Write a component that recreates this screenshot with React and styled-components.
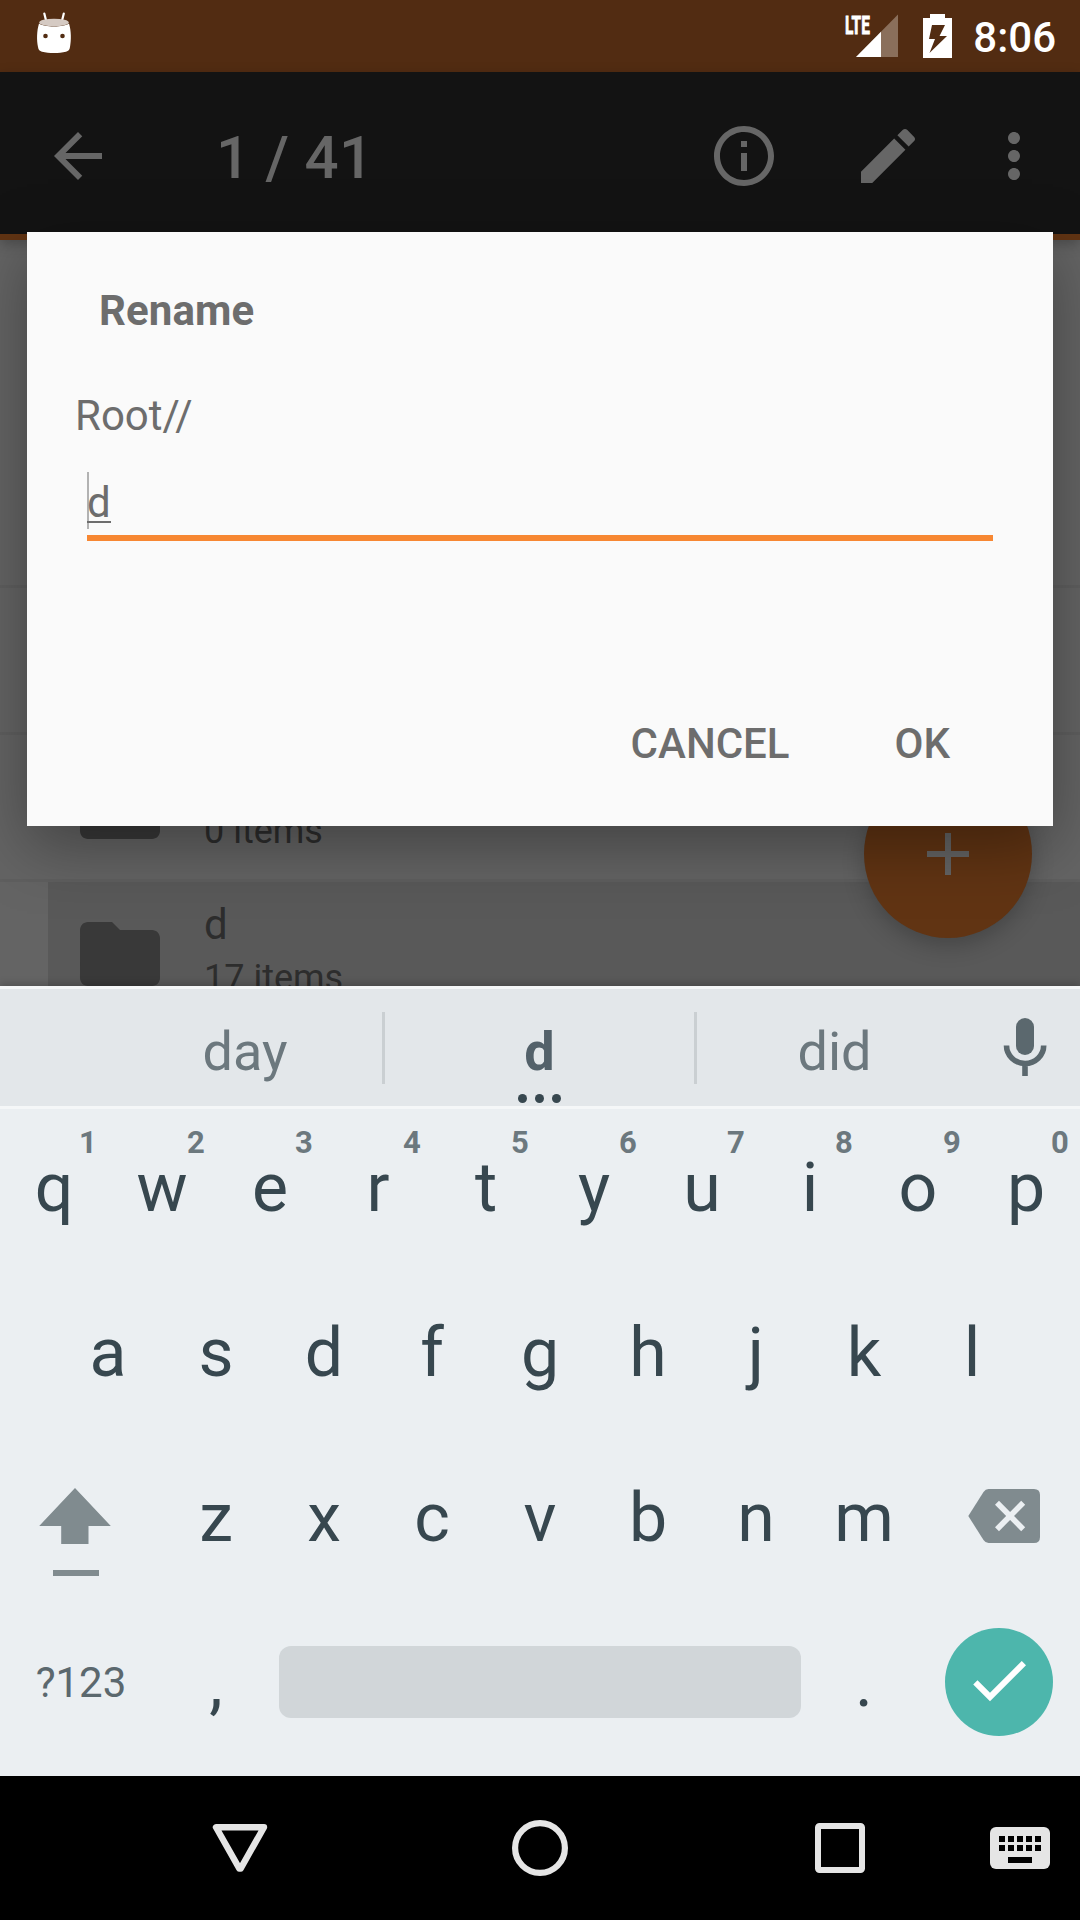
import React from "react";
import styled, { createGlobalStyle } from "styled-components";

const GlobalStyle = createGlobalStyle`
  * { box-sizing: border-box; }
  body { margin: 0; background: #000; font-family: Roboto, "Noto Sans", sans-serif; }
  svg { display: block; flex: none; }
`;

const Screen = styled.div`
  position: relative;
  display: flex;
  flex-direction: column;
  width: 1080px;
  height: 1920px;
  overflow: hidden;
`;

/* ---------- status bar ---------- */
const StatusBar = styled.header`
  display: flex;
  align-items: flex-start;
  flex: none;
  height: 72px;
  padding: 12px 24px 0 36px;
  background: #522c12;
`;
const StatusIcons = styled.div`
  display: flex;
  align-items: flex-start;
  margin-left: auto;
`;
const Signal = styled.svg`
  overflow: visible;
`;
const Battery = styled.svg`
  margin: 2px 21px 0 24px;
`;
const Clock = styled.span`
  margin-top: 1px;
  color: #fff;
  font-size: 42px;
  font-weight: 500;
  line-height: 50px;
  white-space: nowrap;
`;

/* ---------- toolbar ---------- */
const Toolbar = styled.nav`
  position: relative;
  display: flex;
  align-items: center;
  flex: none;
  height: 168px;
  padding: 0 30px 0 42px;
  background: #131313;
  border-bottom: 6px solid #613413;
  box-shadow: 0 4px 12px rgba(0, 0, 0, 0.25);
  color: #666;
`;
const ToolbarTitle = styled.h1`
  flex: 1;
  margin: 9px 0 0 102px;
  font-size: 60px;
  font-weight: 500;
  line-height: 70px;
  letter-spacing: 0.3px;
`;
const ToolbarIcon = styled.svg`
  width: 72px;
  height: 72px;
  margin: 6px 0 0 ${(p) => p.$gap || 0}px;
  fill: currentColor;
`;

/* ---------- file list ---------- */
const FileList = styled.main`
  flex: none;
  height: 746px;
  overflow: hidden;
  background: #646464;
`;
const ListRow = styled.div`
  display: flex;
  height: ${(p) => p.$height || 147}px;
  padding-left: 48px;
  border-bottom: 3px solid #5f5f5f;
`;
const RowBody = styled.div`
  display: flex;
  flex: 1;
  padding: 24px 0 0 24px;
  background: ${(p) => (p.$selected ? "#595959" : "transparent")};
`;
const RowText = styled.div`
  display: flex;
  flex-direction: column;
  margin: -7px 0 0 36px;
  color: #2d2d2d;
`;
const RowName = styled.span`
  font-size: 42px;
  line-height: 51px;
`;
const RowMeta = styled.span`
  font-size: 36px;
  line-height: 57px;
`;
const Fab = styled.button`
  position: absolute;
  left: 864px;
  top: 770px;
  display: grid;
  place-items: center;
  width: 168px;
  height: 168px;
  padding: 0;
  border: 0;
  border-radius: 50%;
  background: #613413;
  box-shadow: 0 8px 22px rgba(0, 0, 0, 0.22);
`;

/* ---------- dialog ---------- */
const DialogLayer = styled.div`
  position: absolute;
  inset: 72px 0 934px;
  padding: 160px 27px 0;
  overflow: hidden;
`;
const Dialog = styled.section`
  display: flex;
  flex-direction: column;
  height: 594px;
  padding: 54px 60px 0 48px;
  background: #fafafa;
  box-shadow: 0 20px 60px rgba(0, 0, 0, 0.34);
  color: #6d6d6d;
  font-size: 42px;
  line-height: 50px;
`;
const DialogTitle = styled.h2`
  margin: 0 0 0 24px;
  font-size: 42px;
  font-weight: 700;
  line-height: 50px;
  letter-spacing: 0.1px;
`;
const PathLabel = styled.div`
  margin-top: 55px;
`;
const NameField = styled.div`
  display: flex;
  height: 69px;
  margin: 31px 0 0 12px;
  border-bottom: 6px solid #f78732;
`;
const Caret = styled.span`
  width: 1.5px;
  height: 57px;
  margin-right: -1.5px;
  background: #b2b2b2;
`;
const Composing = styled.span`
  height: 51px;
  padding-top: 6px;
  line-height: 50px;
  border-bottom: 2px solid #6d6d6d;
`;
const DialogActions = styled.div`
  display: flex;
  justify-content: flex-end;
  gap: 105px;
  margin-top: 178px;
  padding-right: 43px;
`;
const ActionButton = styled.button`
  padding: 0;
  border: 0;
  background: none;
  color: inherit;
  font: 500 42px/50px Roboto, sans-serif;
  white-space: nowrap;
`;

/* ---------- keyboard ---------- */
const Keyboard = styled.section`
  position: relative;
  display: flex;
  flex-direction: column;
  flex: none;
  height: 790px;
  background: #ebeff2;
  box-shadow: 0 -2px 8px rgba(0, 0, 0, 0.2);
`;
const Suggestions = styled.div`
  display: grid;
  grid-template-columns: 108px 274px 3px 309px 3px 275px 108px;
  align-items: start;
  height: 123px;
  border-top: 3px solid #f5f7f8;
  border-bottom: 3px solid #f5f7f8;
  background: #e3e7ea;
`;
const Divider = styled.span`
  height: 72px;
  margin-top: 23px;
  background: #cacfd2;
`;
const Suggestion = styled.div`
  display: flex;
  flex-direction: column;
  align-items: center;
  padding-top: 32px;
  color: ${(p) => (p.$active ? "#53616a" : "#6c787e")};
  font-size: 54px;
  font-weight: ${(p) => (p.$active ? 700 : 400)};
  line-height: 62px;
`;
const Dots = styled.span`
  display: flex;
  gap: 8px;
  margin-top: 11px;
`;
const Dot = styled.i`
  width: 9px;
  height: 9px;
  border-radius: 50%;
  background: #37474f;
`;
const MicIcon = styled.svg`
  margin: 29px 0 0 31px;
`;
const KeyRow = styled.div`
  display: flex;
  justify-content: center;
  flex: none;
  height: ${(p) => p.$height || 165}px;
  padding-bottom: ${(p) => p.$bottom || 0}px;
`;
const Key = styled.div`
  position: relative;
  display: flex;
  align-items: center;
  justify-content: center;
  width: ${(p) => p.$width || 108}px;
  padding-top: ${(p) => p.$drop || 0}px;
  color: #37474f;
  font-size: 68px;
  line-height: 80px;
`;
const Hint = styled.sup`
  position: absolute;
  left: 68px;
  top: 16px;
  width: 40px;
  color: #6c787e;
  font-size: 31px;
  font-weight: 700;
  line-height: 36px;
  text-align: center;
`;
const SymbolLabel = styled.span`
  color: #5b686e;
  font-size: 42px;
  line-height: 50px;
`;
const SpaceBar = styled.div`
  align-self: center;
  width: 522px;
  height: 72px;
  margin: 0 9px;
  border-radius: 12px;
  background: #d1d6d9;
`;
const EnterButton = styled.div`
  display: grid;
  place-items: center;
  width: 108px;
  height: 108px;
  border-radius: 50%;
  background: #4db6ac;
`;

/* ---------- navigation bar ---------- */
const NavBar = styled.footer`
  display: flex;
  align-items: center;
  flex: none;
  height: 144px;
  padding: 0 30px 0 212px;
  background: #000;
`;
const NavIcon = styled.svg`
  margin-right: ${(p) => p.$after || 0}px;
`;

const FolderIcon = () => (
  <svg width="96" height="96" viewBox="0 0 24 24" fill="#393939">
    <path d="M10 4H4c-1.1 0-1.99.9-1.99 2L2 18c0 1.1.9 2 2 2h16c1.1 0 2-.9 2-2V8c0-1.1-.9-2-2-2h-8l-2-2z" />
  </svg>
);

const FileRow = ({ name, meta, selected }) => (
  <ListRow>
    <RowBody $selected={selected}>
      <FolderIcon />
      <RowText>
        <RowName>{name}</RowName>
        <RowMeta>{meta}</RowMeta>
      </RowText>
    </RowBody>
  </ListRow>
);

const letters = (s) => s.split("").map((c) => <Key key={c}>{c}</Key>);

export default function App() {
  return (
    <Screen>
      <GlobalStyle />
      <StatusBar>
        <svg width="36" height="42" viewBox="36 12 36 42">
          <path d="M44.3 13.5l2 8M63.8 13.5l-2 8" stroke="#fff" strokeWidth="2.2" strokeLinecap="round" />
          <path d="M39 23.5C44 27.5 64 27.5 69 23.5C71.3 31 71.3 40 70 47C69.5 50 68.5 51 66 51.7C59 53.4 49 53.4 42 51.7C39.5 51 38.5 50 38 47C36.6 40 36.7 31 39 23.5Z" fill="#fff" />
          <ellipse cx="54" cy="22.5" rx="14.8" ry="3.8" fill="#d5cac3" />
          <circle cx="45.5" cy="36" r="2.3" fill="#522c12" />
          <circle cx="62.5" cy="36" r="2.3" fill="#522c12" />
        </svg>
        <StatusIcons>
          <Signal width="54" height="46" viewBox="845 12 54 46">
            <text transform="translate(845 34) scale(.58 1)" fontSize="26.5" fontWeight="700" fill="#fff" stroke="#fff" strokeWidth="0.9">LTE</text>
            <path d="M898 14.5V57H856z" fill="#8a6f5b" />
            <path d="M881 31.7V57H856z" fill="#fff" />
          </Signal>
          <Battery width="29" height="44" viewBox="923 14 29 44">
            <path d="M930 14h15v4h7v40h-29V18h7zM932 25l-3 14h6l-5.5 14L947 36h-7.5l5.5-11z" fill="#fff" fillRule="evenodd" />
          </Battery>
          <Clock>8:06</Clock>
        </StatusIcons>
      </StatusBar>

      <Toolbar>
        <ToolbarIcon viewBox="0 0 24 24">
          <path d="M20 11H7.83l5.59-5.59L12 4l-8 8 8 8 1.41-1.41L7.83 13H20v-2z" />
        </ToolbarIcon>
        <ToolbarTitle>1 / 41</ToolbarTitle>
        <ToolbarIcon viewBox="0 0 24 24">
          <path d="M11 17h2v-6h-2v6zm1-15C6.48 2 2 6.48 2 12s4.48 10 10 10 10-4.48 10-10S17.52 2 12 2zm0 18c-4.41 0-8-3.59-8-8s3.59-8 8-8 8 3.59 8 8-3.59 8-8 8zM11 9h2V7h-2v2z" />
        </ToolbarIcon>
        <ToolbarIcon $gap={72} viewBox="0 0 24 24">
          <path d="M3 17.25V21h3.75L17.81 9.94l-3.75-3.75L3 17.25zM20.71 7.04c.39-.39.39-1.02 0-1.41l-2.34-2.34c-.39-.39-1.02-.39-1.41 0l-1.83 1.83 3.75 3.75 1.83-1.83z" />
        </ToolbarIcon>
        <ToolbarIcon $gap={54} viewBox="0 0 24 24">
          <path d="M12 8c1.1 0 2-.9 2-2s-.9-2-2-2-2 .9-2 2 .9 2 2 2zm0 2c-1.1 0-2 .9-2 2s.9 2 2 2 2-.9 2-2-.9-2-2-2zm0 6c-1.1 0-2 .9-2 2s.9 2 2 2 2-.9 2-2-.9-2-2-2z" />
        </ToolbarIcon>
      </Toolbar>

      <FileList>
        <ListRow $height={348} />
        <ListRow />
        <FileRow meta="0 items" name={"\u00a0"} />
        <FileRow name="d" meta="17 items" selected />
      </FileList>
      <Fab aria-label="Add">
        <svg width="72" height="72" viewBox="0 0 24 24" fill="#646464">
          <path d="M19 13h-6v6h-2v-6H5v-2h6V5h2v6h6v2z" />
        </svg>
      </Fab>

      <DialogLayer>
        <Dialog>
          <DialogTitle>Rename</DialogTitle>
          <PathLabel>Root//</PathLabel>
          <NameField>
            <Caret />
            <Composing>d</Composing>
          </NameField>
          <DialogActions>
            <ActionButton>CANCEL</ActionButton>
            <ActionButton>OK</ActionButton>
          </DialogActions>
        </Dialog>
      </DialogLayer>

      <Keyboard>
        <Suggestions>
          <span />
          <Suggestion>day</Suggestion>
          <Divider />
          <Suggestion $active>
            d
            <Dots><Dot /><Dot /><Dot /></Dots>
          </Suggestion>
          <Divider />
          <Suggestion>did</Suggestion>
          <MicIcon width="44" height="58" viewBox="1003 1018 44 58">
            <rect x="1016" y="1018" width="18" height="37" rx="9" fill="#5b686e" />
            <path d="M1006.5 1045.5a18.6 18 0 0 0 37.2 0M1025 1063v13" fill="none" stroke="#5b686e" strokeWidth="5.6" />
          </MicIcon>
        </Suggestions>
        <KeyRow $height={161} $bottom={4}>
          {"qwertyuiop".split("").map((c, i) => (
            <Key key={c}>
              {c}
              <Hint>{(i + 1) % 10}</Hint>
            </Key>
          ))}
        </KeyRow>
        <KeyRow>{letters("asdfghjkl")}</KeyRow>
        <KeyRow>
          <Key $width={162}>
            <svg width="150" height="165" viewBox="6 1435 150 165" fill="#808b8f">
              <path d="M75 1488l35.8 38H88.5v18h-27.3v-18H39.2zM53 1570h46v6H53z" />
            </svg>
          </Key>
          {letters("zxcvbnm")}
          <Key $width={162}>
            <svg width="162" height="165" viewBox="918 1435 162 165">
              <path d="M988.5 1489H1034q6 0 6 6v42q0 6-6 6H988.5q-3 0-5-3L968.3 1516l15.2-24q2-3 5-3z" fill="#808b8f" />
              <path d="M997 1502.8l26.2 26.4M1023.2 1502.8L997 1529.2" stroke="#ebeff2" strokeWidth="5.6" />
            </svg>
          </Key>
        </KeyRow>
        <KeyRow $height={176} $bottom={12}>
          <Key $width={162} $drop={2}><SymbolLabel>?123</SymbolLabel></Key>
          <Key $drop={2}>,</Key>
          <SpaceBar />
          <Key $drop={2}>.</Key>
          <Key $width={162}>
            <EnterButton>
              <svg width="72" height="72" viewBox="0 .6 24 24" fill="#fff">
                <path d="M9 16.17L4.83 12l-1.42 1.41L9 19 21 7l-1.41-1.41z" />
              </svg>
            </EnterButton>
          </Key>
        </KeyRow>
      </Keyboard>

      <NavBar>
        <NavIcon $after={244} width="56" height="48" viewBox="0 0 56 48">
          <path d="M4 3.2H52L28.6 44.6H27.4z" fill="none" stroke="#e5e5e5" strokeWidth="6.4" strokeLinejoin="round" />
        </NavIcon>
        <NavIcon $after={247} width="56" height="56" viewBox="0 0 56 56">
          <circle cx="28" cy="28" r="24.9" fill="none" stroke="#e5e5e5" strokeWidth="6.2" />
        </NavIcon>
        <NavIcon $after={125} width="50" height="50" viewBox="0 0 50 50">
          <rect x="3" y="3" width="44" height="44" rx="1.5" fill="none" stroke="#e5e5e5" strokeWidth="6" />
        </NavIcon>
        <NavIcon width="60" height="42" viewBox="0 0 60 42">
          <rect width="60" height="42" rx="6" fill="#e5e5e5" />
          {[9, 18].map((y) =>
            [9, 18, 27, 36, 45].map((x) => <rect key={`${x}-${y}`} x={x} y={y} width="6" height="6" />)
          )}
          <rect x="18" y="30" width="24" height="6" />
        </NavIcon>
      </NavBar>
    </Screen>
  );
}
